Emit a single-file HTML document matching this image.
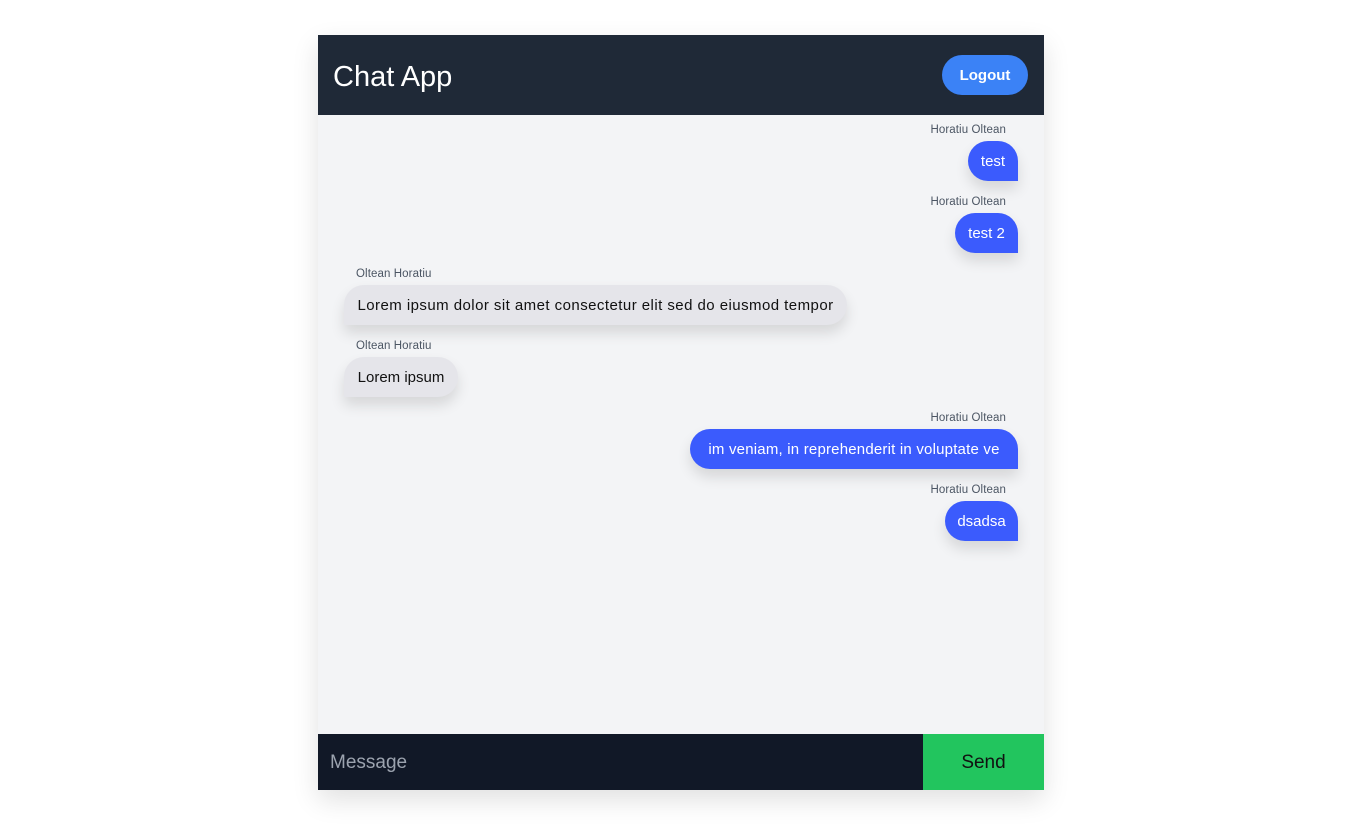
<!DOCTYPE html>
<html><head><meta charset="utf-8"><style>
*{box-sizing:border-box;margin:0;padding:0}
body{width:1356px;height:832px;background:#fff;font-family:"Liberation Sans",sans-serif;position:relative;overflow:hidden}
.app{position:absolute;left:318px;top:35px;width:726px;height:755px;background:#f3f4f6;box-shadow:0 10px 25px rgba(0,0,0,.12)}
.hdr{position:absolute;left:0;top:0;width:726px;height:80px;background:#1f2937}
.title{position:absolute;left:15px;top:26px;color:#fff;font-size:29px}
.logout{position:absolute;left:624px;top:20px;width:86px;height:40px;border-radius:20px;background:#3b82f6;color:#fff;font-weight:bold;font-size:15px;text-align:center;line-height:42px}
.name{position:absolute;font-size:11.5px;color:#4b5563;white-space:nowrap;letter-spacing:.1px}
.b{position:absolute;height:40px;line-height:42px;font-size:15px;white-space:nowrap;text-align:center;border-radius:20px;box-shadow:0 8px 14px rgba(0,0,0,.12)}
.s{background:#3b5bfd;color:#fff;border-bottom-right-radius:0}
.r{background:#e5e5ea;color:#111;border-bottom-left-radius:0}
.ftr{position:absolute;left:0;top:699px;width:726px;height:56px;background:#111827}
.ph{position:absolute;left:12px;top:18px;color:#9ca3af;font-size:19px}
.send{position:absolute;left:605px;top:0;width:121px;height:56px;background:#22c55e;color:#111;font-size:19px;text-align:center;line-height:58px}
</style></head><body>
<div class="app">
<div class="hdr"><div class="title">Chat App</div><div class="logout">Logout</div></div>
<div class="name" style="right:38px;top:89px">Horatiu Oltean</div>
<div class="b s" style="right:26px;top:106px;width:50px">test</div>
<div class="name" style="right:38px;top:161px">Horatiu Oltean</div>
<div class="b s" style="right:26px;top:178px;width:63px">test 2</div>
<div class="name" style="left:38px;top:233px">Oltean Horatiu</div>
<div class="b r" style="left:26px;top:250px;width:503px;letter-spacing:.45px">Lorem ipsum dolor sit amet consectetur elit sed do eiusmod tempor</div>
<div class="name" style="left:38px;top:305px">Oltean Horatiu</div>
<div class="b r" style="left:26px;top:322px;width:114px">Lorem ipsum</div>
<div class="name" style="right:38px;top:377px">Horatiu Oltean</div>
<div class="b s" style="right:26px;top:394px;width:328px;letter-spacing:.2px">im veniam, in reprehenderit in voluptate ve</div>
<div class="name" style="right:38px;top:449px">Horatiu Oltean</div>
<div class="b s" style="right:26px;top:466px;width:73px">dsadsa</div>
<div class="ftr"><div class="ph">Message</div><div class="send">Send</div></div>
</div>
</body></html>
